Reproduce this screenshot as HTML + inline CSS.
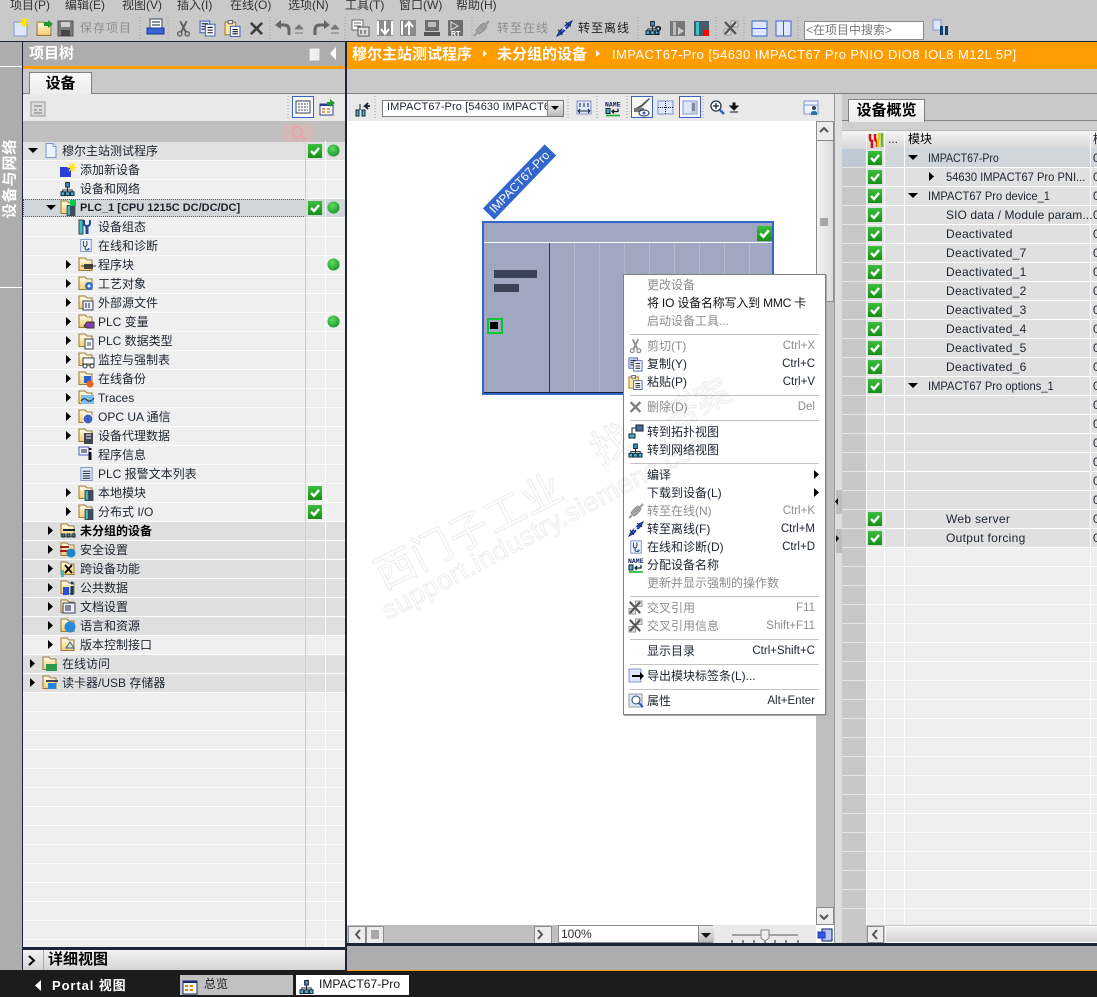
<!DOCTYPE html>
<html><head><meta charset="utf-8"><style>
html,body{margin:0;padding:0}
body{width:1097px;height:997px;position:relative;overflow:hidden;background:#c9c9c9;font:12px/19px "Liberation Sans","Noto Sans CJK SC",sans-serif;color:#1c2430}
.b,.t,.s{position:absolute}
.t{white-space:nowrap;height:19px}
.g{color:#8e8e8e}
.w{color:#fff;font-weight:bold}
.tab{position:absolute;background:linear-gradient(#fafafa,#ececec);border:1px solid #808080;border-bottom:0;font-weight:bold;font-size:15px;text-align:center;color:#000}
.s{background:#c4c4c4;height:1px;left:6px;right:6px}
.r{text-align:right}
.m .t{height:18px;line-height:18px;left:23px}
.m .t.r{left:auto;right:10px;font-size:11.5px}
.x{transform-origin:0 50%}
</style></head><body>

<!-- top -->
<div class="t" style="left:10px;top:-4px;color:#333">项目(P)</div>
<div class="t" style="left:65px;top:-4px;color:#333">编辑(E)</div>
<div class="t" style="left:122px;top:-4px;color:#333">视图(V)</div>
<div class="t" style="left:177px;top:-4px;color:#333">插入(I)</div>
<div class="t" style="left:230px;top:-4px;color:#333">在线(O)</div>
<div class="t" style="left:288px;top:-4px;color:#333">选项(N)</div>
<div class="t" style="left:345px;top:-4px;color:#333">工具(T)</div>
<div class="t" style="left:399px;top:-4px;color:#333">窗口(W)</div>
<div class="t" style="left:456px;top:-4px;color:#333">帮助(H)</div>
<div class="t g" style="left:80px;top:19px;letter-spacing:1px">保存项目</div>
<div class="t g" style="left:497px;top:19px;letter-spacing:1px">转至在线</div>
<div class="t" style="left:578px;top:19px;letter-spacing:1px;color:#222">转至离线</div>
<div class="b" style="left:804px;top:21px;width:118px;height:17px;background:#fff;border:1px solid #8a8a8a"></div>
<div class="t" style="left:806px;top:21px;color:#777">&lt;在项目中搜索&gt;</div>

<div class="b" style="left:0;top:41px;width:1097px;height:1px;background:#1c2636"></div>

<!-- left strip -->
<div class="b" style="left:0;top:42px;width:22px;height:928px;background:#adadad"></div>
<div class="b" style="left:0;top:66px;width:22px;height:1px;background:#fff"></div>
<div class="b" style="left:0;top:287px;width:22px;height:1px;background:#fff"></div>
<div class="t w" style="left:-30px;top:169px;width:80px;text-align:center;transform:rotate(-90deg);font-size:15px;letter-spacing:1px;color:#fff">设备与网络</div>
<div class="b" style="left:22px;top:42px;width:1px;height:928px;background:#1c2636"></div>

<!-- project tree panel -->
<div class="b" style="left:23px;top:42px;width:322px;height:24px;background:#adadad"></div>
<div class="b" style="left:23px;top:66px;width:322px;height:3px;background:#ff9c00"></div>
<div class="t w" style="left:29px;top:44px;font-size:15px">项目树</div>
<div class="b" style="left:23px;top:69px;width:322px;height:24px;background:#c9c9c9"></div>
<div class="b" style="left:23px;top:93px;width:322px;height:1px;background:#808080"></div>
<div class="tab" style="left:29px;top:72px;width:61px;height:22px;line-height:21px">设备</div>
<div class="b" style="left:23px;top:94px;width:322px;height:27px;background:#e9e9e9"></div>
<div class="b" style="left:23px;top:121px;width:322px;height:21px;background:#bfbfbf"></div>
<div class="b" style="left:284px;top:124px;width:30px;height:22px;background:#d2b8b8"></div>

<div class="b" style="left:0;top:1px;width:0;height:0">
<div class="b" style="left:23px;top:141px;width:322px;height:806px;background:repeating-linear-gradient(#efefef 0,#efefef 18px,#fff 18px,#fff 19px)"></div>
<div class="b" style="left:23px;top:141px;width:322px;height:18px;background:#e1e1e1"></div>
<div class="b" style="left:23px;top:521px;width:322px;height:113px;background:repeating-linear-gradient(#dfdfdf 0,#dfdfdf 18px,#fff 18px,#fff 19px)"></div>
<div class="b" style="left:23px;top:654px;width:322px;height:37px;background:repeating-linear-gradient(#dfdfdf 0,#dfdfdf 18px,#fff 18px,#fff 19px)"></div>
<div class="b" style="left:23px;top:198px;width:322px;height:18px;background:#d1d6da"></div>
<div class="b" style="left:23px;top:198px;width:281px;height:16px;border:1px dotted #555"></div>
<div class="b" style="left:305px;top:140px;width:1px;height:806px;background:#cfcfcf"></div>
<div class="b" style="left:325px;top:140px;width:1px;height:806px;background:#fff"></div>

<div class="t" style="left:62px;top:141px">穆尔主站测试程序</div>
<div class="t" style="left:80px;top:160px">添加新设备</div>
<div class="t" style="left:80px;top:179px">设备和网络</div>
<div class="t" style="left:80px;top:198px;font-weight:bold;font-size:11px">PLC_1 [CPU 1215C DC/DC/DC]</div>
<div class="t" style="left:98px;top:217px">设备组态</div>
<div class="t" style="left:98px;top:236px">在线和诊断</div>
<div class="t" style="left:98px;top:255px">程序块</div>
<div class="t" style="left:98px;top:274px">工艺对象</div>
<div class="t" style="left:98px;top:293px">外部源文件</div>
<div class="t" style="left:98px;top:312px">PLC 变量</div>
<div class="t" style="left:98px;top:331px">PLC 数据类型</div>
<div class="t" style="left:98px;top:350px">监控与强制表</div>
<div class="t" style="left:98px;top:369px">在线备份</div>
<div class="t" style="left:98px;top:388px">Traces</div>
<div class="t" style="left:98px;top:407px">OPC UA 通信</div>
<div class="t" style="left:98px;top:426px">设备代理数据</div>
<div class="t" style="left:98px;top:445px">程序信息</div>
<div class="t" style="left:98px;top:464px">PLC 报警文本列表</div>
<div class="t" style="left:98px;top:483px">本地模块</div>
<div class="t" style="left:98px;top:502px">分布式 I/O</div>
<div class="t" style="left:80px;top:521px;font-weight:bold;color:#000">未分组的设备</div>
<div class="t" style="left:80px;top:540px">安全设置</div>
<div class="t" style="left:80px;top:559px">跨设备功能</div>
<div class="t" style="left:80px;top:578px">公共数据</div>
<div class="t" style="left:80px;top:597px">文档设置</div>
<div class="t" style="left:80px;top:616px">语言和资源</div>
<div class="t" style="left:80px;top:635px">版本控制接口</div>
<div class="t" style="left:62px;top:654px">在线访问</div>
<div class="t" style="left:62px;top:673px">读卡器/USB 存储器</div>
</div>

<div class="b" style="left:23px;top:947px;width:322px;height:3px;background:#1c2636"></div>
<div class="b" style="left:23px;top:950px;width:322px;height:20px;background:linear-gradient(#f2f2f2,#d4d4d4)"></div>
<div class="b" style="left:43px;top:950px;width:1px;height:20px;background:#a8a8a8"></div>
<div class="t" style="left:48px;top:950px;font-weight:bold;font-size:15px;color:#000">详细视图</div>

<div class="b" style="left:345px;top:42px;width:2px;height:928px;background:#1c2636"></div>

<!-- center -->
<div class="b" style="left:347px;top:42px;width:750px;height:27px;background:#ff9c00"></div>
<div class="t w" style="left:352px;top:45px;font-size:15px">穆尔主站测试程序</div>
<div class="t w" style="left:497px;top:45px;font-size:15px">未分组的设备</div>
<div class="t" style="left:612px;top:45px;color:#fff;font-size:13px;letter-spacing:.43px">IMPACT67-Pro [54630 IMPACT67 Pro PNIO DIO8 IOL8 M12L 5P]</div>
<div class="b" style="left:347px;top:69px;width:750px;height:24px;background:#c9c9c9"></div>
<div class="b" style="left:347px;top:93px;width:750px;height:1px;background:#808080"></div>
<div class="b" style="left:347px;top:94px;width:488px;height:27px;background:#e9e9e9"></div>
<div class="b" style="left:347px;top:121px;width:469px;height:804px;background:#fff"></div>
<div class="b" style="left:382px;top:100px;width:180px;height:15px;background:#fff;border:1px solid #7c7c7c"></div>
<div class="t" style="left:387px;top:98px;width:160px;overflow:hidden;letter-spacing:.1px;font-size:11px">IMPACT67-Pro [54630 IMPACT67 Pro</div>
<div class="b" style="left:547px;top:101px;width:15px;height:15px;background:linear-gradient(#eee,#bbb);border-left:1px solid #888"></div>

<!-- scroll right -->
<div class="b" style="left:816px;top:121px;width:18px;height:804px;background:#bfbfbf"></div>
<div class="b" style="left:816px;top:121px;width:16px;height:18px;background:#ececec;border:1px solid #8c8c8c"></div>
<div class="b" style="left:816px;top:140px;width:16px;height:160px;background:linear-gradient(90deg,#f2f2f2,#dcdcdc);border:1px solid #8c8c8c"></div>
<div class="b" style="left:816px;top:907px;width:16px;height:16px;background:#ececec;border:1px solid #8c8c8c"></div>
<!-- scroll bottom -->
<div class="b" style="left:347px;top:925px;width:469px;height:18px;background:#bfbfbf"></div>
<div class="b" style="left:348px;top:926px;width:16px;height:16px;background:#ececec;border:1px solid #8c8c8c"></div>
<div class="b" style="left:366px;top:926px;width:16px;height:16px;background:#ececec;border:1px solid #8c8c8c"></div>
<div class="b" style="left:534px;top:926px;width:16px;height:16px;background:#ececec;border:1px solid #8c8c8c"></div>
<div class="b" style="left:713px;top:925px;width:103px;height:18px;background:#e9e9e9"></div>
<div class="b" style="left:558px;top:925px;width:153px;height:16px;background:#fff;border:1px solid #8c8c8c"></div>
<div class="t" style="left:561px;top:925px;color:#333">100%</div>
<div class="b" style="left:698px;top:926px;width:15px;height:16px;background:linear-gradient(#eee,#bbb);border-left:1px solid #888"></div>
<div class="b" style="left:816px;top:925px;width:18px;height:18px;background:#fff"></div>

<!-- device -->
<div class="b" style="left:482px;top:221px;width:288px;height:170px;background:#a1a7c0;border:2px solid #3366cc"></div>
<div class="b" style="left:484px;top:242px;width:288px;height:1px;background:#fff"></div>
<div class="b" style="left:549px;top:243px;width:1px;height:150px;background:#333b4e"></div>
<div class="b" style="left:574px;top:243px;width:176px;height:150px;background:repeating-linear-gradient(90deg,#b4b9cc 0,#b4b9cc 1px,transparent 1px,transparent 25px)"></div>
<div class="b" style="left:484px;top:392px;width:288px;height:1px;background:#1c2636"></div>
<div class="b" style="left:494px;top:270px;width:43px;height:8px;background:#3a4257"></div>
<div class="b" style="left:494px;top:284px;width:25px;height:8px;background:#3a4257"></div>
<div class="b" style="left:487px;top:318px;width:12px;height:12px;border:2px solid #00c832;background:#a1a7c0"></div>
<div class="b" style="left:490px;top:322px;width:8px;height:7px;background:#000"></div>
<div class="b" style="left:475px;top:174px;width:89px;height:16px;background:#3366cc;transform:rotate(-46deg);color:#fff;font-size:12px;line-height:16px;text-align:center;white-space:nowrap">IMPACT67-Pro</div>

<!-- right panel -->
<div class="b" style="left:834px;top:94px;width:8px;height:849px;background:#dfdfdf;border-left:1px solid #9a9a9a"></div>
<div class="b" style="left:836px;top:490px;width:6px;height:24px;background:#bdbdbd"></div>
<div class="b" style="left:836px;top:529px;width:6px;height:24px;background:#bdbdbd"></div>
<div class="b" style="left:842px;top:94px;width:255px;height:26px;background:#c9c9c9"></div>
<div class="b" style="left:842px;top:120px;width:255px;height:1px;background:#808080"></div>
<div class="b" style="left:842px;top:121px;width:255px;height:9px;background:#cfcfcf"></div>
<div class="tab" style="left:848px;top:99px;width:75px;height:22px;line-height:21px">设备概览</div>
<div class="b" style="left:842px;top:130px;width:255px;height:18px;background:linear-gradient(#f4f4f4,#d6d6d6);border-top:1px solid #bbb"></div>

<div class="b" style="left:0;top:1px;width:0;height:0">
<div class="b" style="left:842px;top:148px;width:255px;height:777px;background:repeating-linear-gradient(#efefef 0,#efefef 18px,#fff 18px,#fff 19px)"></div>
<div class="b" style="left:842px;top:148px;width:255px;height:398px;background:repeating-linear-gradient(#e0e0e0 0,#e0e0e0 18px,#fff 18px,#fff 19px)"></div>
<div class="b" style="left:842px;top:148px;width:24px;height:777px;background:repeating-linear-gradient(#c8c8c8 0,#c8c8c8 18px,#e6e6e6 18px,#e6e6e6 19px)"></div>
<div class="b" style="left:842px;top:148px;width:24px;height:18px;background:#bfcad4"></div>
<div class="b" style="left:884px;top:148px;width:213px;height:18px;background:#cfd6dc"></div>
<div class="b" style="left:866px;top:130px;width:1px;height:795px;background:#fff"></div>
<div class="b" style="left:884px;top:130px;width:1px;height:795px;background:#fff"></div>
<div class="b" style="left:904px;top:130px;width:1px;height:795px;background:#fff"></div>
<div class="b" style="left:1090px;top:130px;width:1px;height:795px;background:#fff"></div>
<div class="t" style="left:888px;top:129px">...</div>
<div class="t" style="left:908px;top:129px;color:#000">模块</div>
<div class="t" style="left:1093px;top:129px">模</div>

<div class="t x" style="left:928px;top:148px;transform:scaleX(.88)">IMPACT67-Pro</div>
<div class="t x" style="left:946px;top:167px;transform:scaleX(.93)">54630 IMPACT67 Pro PNI...</div>
<div class="t x" style="left:928px;top:186px;transform:scaleX(.93)">IMPACT67 Pro device_1</div>
<div class="t" style="left:946px;top:205px;letter-spacing:.1px">SIO data / Module param...</div>
<div class="t" style="left:946px;top:224px;letter-spacing:.3px">Deactivated</div>
<div class="t" style="left:946px;top:243px;letter-spacing:.3px">Deactivated_7</div>
<div class="t" style="left:946px;top:262px;letter-spacing:.3px">Deactivated_1</div>
<div class="t" style="left:946px;top:281px;letter-spacing:.3px">Deactivated_2</div>
<div class="t" style="left:946px;top:300px;letter-spacing:.3px">Deactivated_3</div>
<div class="t" style="left:946px;top:319px;letter-spacing:.3px">Deactivated_4</div>
<div class="t" style="left:946px;top:338px;letter-spacing:.3px">Deactivated_5</div>
<div class="t" style="left:946px;top:357px;letter-spacing:.3px">Deactivated_6</div>
<div class="t x" style="left:928px;top:376px;transform:scaleX(.93)">IMPACT67 Pro options_1</div>
<div class="t" style="left:946px;top:509px;letter-spacing:.3px">Web server</div>
<div class="t" style="left:946px;top:528px;letter-spacing:.3px">Output forcing</div>
<div class="t" style="left:1093px;top:148px">0</div><div class="t" style="left:1093px;top:167px">0</div><div class="t" style="left:1093px;top:186px">0</div><div class="t" style="left:1093px;top:205px">0</div><div class="t" style="left:1093px;top:224px">0</div><div class="t" style="left:1093px;top:243px">0</div><div class="t" style="left:1093px;top:262px">0</div><div class="t" style="left:1093px;top:281px">0</div><div class="t" style="left:1093px;top:300px">0</div><div class="t" style="left:1093px;top:319px">0</div><div class="t" style="left:1093px;top:338px">0</div><div class="t" style="left:1093px;top:357px">0</div><div class="t" style="left:1093px;top:376px">0</div><div class="t" style="left:1093px;top:395px">0</div><div class="t" style="left:1093px;top:414px">0</div><div class="t" style="left:1093px;top:433px">0</div><div class="t" style="left:1093px;top:452px">0</div><div class="t" style="left:1093px;top:471px">0</div><div class="t" style="left:1093px;top:490px">0</div><div class="t" style="left:1093px;top:509px">0</div><div class="t" style="left:1093px;top:528px">0</div>
</div>

<div class="b" style="left:842px;top:925px;width:24px;height:18px;background:#c8c8c8"></div>
<div class="b" style="left:866px;top:925px;width:231px;height:18px;background:#bfbfbf"></div>
<div class="b" style="left:867px;top:926px;width:15px;height:15px;background:#ececec;border:1px solid #8c8c8c"></div>
<div class="b" style="left:885px;top:926px;width:212px;height:15px;background:linear-gradient(#f0f0f0,#d4d4d4);border:1px solid #fff"></div>

<div class="b" style="left:347px;top:943px;width:750px;height:3px;background:#1c2636"></div>
<div class="b" style="left:347px;top:946px;width:750px;height:24px;background:#adadad"></div>
<div class="b" style="left:347px;top:970px;width:750px;height:1px;background:#ff9c00"></div>

<!-- bottom bar -->
<div class="b" style="left:0;top:971px;width:1097px;height:26px;background:#1c1c1c"></div>
<div class="b" style="left:0;top:970px;width:347px;height:1px;background:#1c1c1c"></div>
<div class="t" style="left:52px;top:976px;color:#fff;font-weight:bold;font-size:13px;letter-spacing:.9px">Portal 视图</div>
<div class="b" style="left:180px;top:975px;width:113px;height:20px;background:#c0c0c0"></div>
<div class="t" style="left:204px;top:975px;color:#222">总览</div>
<div class="b" style="left:296px;top:975px;width:113px;height:20px;background:#fff"></div>
<div class="t" style="left:319px;top:975px;color:#111;letter-spacing:.05px">IMPACT67-Pro</div>

<!-- icons -->
<svg width="1097" height="997" viewBox="0 0 1097 997" style="position:absolute;left:0;top:0">
<defs>
<linearGradient id="gc" x1="0" y1="0" x2="0" y2="1"><stop offset="0" stop-color="#3cbf3c"/><stop offset="1" stop-color="#159015"/></linearGradient>
<radialGradient id="gd" cx=".4" cy=".35" r=".7"><stop offset="0" stop-color="#5fdc5f"/><stop offset="1" stop-color="#16962a"/></radialGradient>
<linearGradient id="fg" x1="0" y1="0" x2="0" y2="1"><stop offset="0" stop-color="#fff7d0"/><stop offset="1" stop-color="#f5cf78"/></linearGradient>
<symbol id="ck" viewBox="0 0 14 14"><rect width="14" height="14" fill="url(#gc)"/><path d="M3 7l3 3 5-6" fill="none" stroke="#fff" stroke-width="2.4"/></symbol>
<symbol id="dot" viewBox="0 0 14 14"><circle cx="7" cy="7" r="6.5" fill="url(#gd)"/></symbol>
<symbol id="fo" viewBox="0 0 16 16"><path d="M1 14.500V2h6l2 2h5v10.500z" fill="url(#fg)" stroke="#9a7a3a"/><path d="M2.500 5h10" stroke="#fff"/></symbol>
<symbol id="pg" viewBox="0 0 16 16"><path d="M3 1h7l3 3v11H3z" fill="#eef3ff" stroke="#7e93c8"/><path d="M10 1v3h3" fill="#fff" stroke="#7e93c8"/></symbol>
<symbol id="net" viewBox="0 0 16 16"><rect x="6" y="1" width="4" height="5" fill="#3a8fc2" stroke="#123"/><path d="M8 6v3M3 11V9h10v2M8 9v2" fill="none" stroke="#123"/><rect x="1" y="11" width="4" height="4" fill="#4ab0c8" stroke="#123"/><rect x="6" y="11" width="4" height="4" fill="#4ab0c8" stroke="#123"/><rect x="11" y="11" width="4" height="4" fill="#4ab0c8" stroke="#123"/></symbol>
<symbol id="plc" viewBox="0 0 8 10"><rect width="8" height="10" fill="#3d4b5c"/><rect x="1" y="1" width="2" height="8" fill="#38c0c8"/></symbol>
<symbol id="doc" viewBox="0 0 16 16"><rect x="2" y="1" width="12" height="14" fill="#dfe7fb" stroke="#7e93c8"/><path d="M4 5h8M4 7.500h8M4 10h8M4 12.500h8" stroke="#123"/></symbol>
<symbol id="steth" viewBox="0 0 16 16"><rect x="2" y="1" width="12" height="14" fill="#eef3ff" stroke="#6e86c8"/><path d="M5 3v4q0 2 2 2t2-2V3M7 9v3q0 1 2 1h2" fill="none" stroke="#123"/><circle cx="11" cy="12" r="1.300" fill="#3367cc"/></symbol>
<symbol id="cut" viewBox="0 0 16 16"><path d="M5 1l5 10M11 1L6 11" stroke="currentColor" stroke-width="1.800"/><circle cx="4.500" cy="13" r="2" fill="none" stroke="currentColor" stroke-width="1.300"/><circle cx="11.500" cy="13" r="2" fill="none" stroke="currentColor" stroke-width="1.300"/></symbol>
<symbol id="cpy" viewBox="0 0 16 16"><rect x="1" y="1" width="9" height="11" fill="#dfe7fb" stroke="#4a63b8"/><rect x="6" y="4" width="9" height="11" fill="#fff" stroke="#4a63b8"/><path d="M2.500 3.500h6M2.500 6h3M2.500 8.500h3M8 7h5M8 9.500h5M8 12h5" stroke="#112"/></symbol>
<symbol id="pst" viewBox="0 0 16 16"><rect x="1" y="2" width="10" height="12" fill="#fde79d" stroke="#9a7a3a"/><rect x="4" y="0.500" width="4" height="3" fill="#eee" stroke="#666"/><rect x="6" y="6" width="9" height="9.500" fill="#fff" stroke="#4a63b8"/><path d="M8 9h5M8 11h5M8 13h5" stroke="#112"/></symbol>
<symbol id="del" viewBox="0 0 16 16"><path d="M2 2l12 12M14 2L2 14" stroke="currentColor" stroke-width="2.800"/></symbol>
<symbol id="onl" viewBox="0 0 16 16"><path d="M1 15l3-3M15 1l-3 3" stroke="#999" stroke-width="2"/><path d="M3 10l3-4 4 4-4 3zM7 5l3-2 3 3-2 3z" fill="#a8a8a8" stroke="#888"/></symbol>
<symbol id="off" viewBox="0 0 16 16"><path d="M1 15l4-2 3-3-2-2-3 3zM15 1l-4 2-3 3 2 2 3-3z" fill="#2e55e0" stroke="#102a90"/><path d="M6 9l3-3" stroke="#fff"/><path d="M2 9l4 5M9 2l5 4" stroke="#123" stroke-width="1"/></symbol>
<symbol id="name" viewBox="0 0 16 16"><text x="0" y="6" font-size="6.500" font-weight="bold" font-family="Liberation Mono" fill="#102060">NAME</text><rect x="1" y="8" width="4" height="5" fill="#4ab0c8" stroke="#123"/><path d="M13 8v3H7M9 9l-2 2 2 2" fill="none" stroke="#123" stroke-width="1.300"/><path d="M1 15h14" stroke="#17b030" stroke-width="1.600"/></symbol>
<symbol id="xr" viewBox="0 0 16 16"><rect x="8" y="1" width="7" height="6" fill="#ddd" stroke="#999"/><rect x="1" y="9" width="7" height="6" fill="#ddd" stroke="#999"/><path d="M2 2l11 12M13 2L2 14" stroke="#555" stroke-width="2.300"/></symbol>
</defs>

<!-- toolbar -->
<g><rect x="14" y="22" width="13" height="14" fill="#dfe7fb" stroke="#7e93c8"/><path d="M24 18v9M19.500 22.500h9M21 19l6 7M27 19l-6 7" stroke="#ffe400" stroke-width="1.500"/></g>
<g><use href="#fo" x="36" y="20" width="17" height="17"/><path d="M44 22h4v-2l5 4-5 4v-2h-4z" fill="#1d9a2c"/></g>
<g><rect x="58" y="21" width="15" height="15" fill="#7a7a7a" stroke="#555"/><rect x="61" y="22" width="9" height="5" fill="#cfcfcf"/><rect x="61" y="30" width="9" height="6" fill="#444"/></g>
<path d="M140 17v23M168 17v23M270 17v23M345 17v23M472 17v23M638 17v23M716 17v23M744 17v23M798 17v23" stroke="#9d9d9d" stroke-dasharray="1 2"/>
<g><rect x="150" y="19" width="12" height="9" fill="#fff" stroke="#345"/><path d="M152 22h8M152 25h8" stroke="#123"/><path d="M147 28h17v6h-17z" fill="#3b63d8" stroke="#123a9a"/></g>
<use href="#cut" x="175" y="20" width="17" height="17" color="#5e5e5e"/>
<use href="#cpy" x="199" y="20" width="17" height="17"/>
<use href="#pst" x="224" y="20" width="17" height="17"/>
<use href="#del" x="249" y="21" width="15" height="15" color="#3c3c3c"/>
<g fill="none" stroke="#666" stroke-width="3"><path d="M277 25h7q5 0 5 5v5"/><path d="M327 25h-7q-5 0-5 5v5"/></g>
<path d="M275 25l6-5v9zM330 25l-6-5v9z" fill="#666"/>
<path d="M295 29h8M295 33h8M295 29l4-4 4 4M331 29h8M331 33h8M331 29l4-4 4 4" stroke="#777" fill="#777"/>
<g><rect x="352" y="20" width="11" height="10" fill="#fff" stroke="#666"/><path d="M354 23h7M354 26h7" stroke="#666"/><rect x="358" y="27" width="11" height="9" fill="#ddd" stroke="#555"/><path d="M361 30v4M365 30v4" stroke="#333"/></g>
<g><rect x="377" y="20" width="16" height="16" fill="#8a8a8a"/><path d="M385 21v12M381 29l4 5 4-5M378 21v14M392 21v14" stroke="#fff" stroke-width="2" fill="none"/></g>
<g><rect x="400" y="20" width="16" height="16" fill="#8a8a8a"/><path d="M409 35V23M405 27l4-5 4 5M402 21v14" stroke="#fff" stroke-width="2" fill="none"/></g>
<g><rect x="425" y="20" width="14" height="11" fill="#6e6e6e"/><rect x="428" y="22" width="8" height="5" fill="#bbb"/><rect x="424" y="32" width="16" height="4" fill="#555"/></g>
<g><rect x="448" y="20" width="15" height="16" fill="#6e6e6e"/><path d="M451 22l7 4-7 4z" fill="none" stroke="#ddd"/><text x="451" y="36" font-size="7" font-weight="bold" fill="#fff" font-family="Liberation Sans">RT</text></g>
<use href="#onl" x="473" y="20" width="17" height="17"/>
<use href="#off" x="556" y="20" width="17" height="17"/>
<g><use href="#net" x="645" y="20" width="15" height="16"/><text x="654" y="35" font-size="13" font-weight="bold" fill="#123" font-family="Liberation Sans">?</text></g>
<g><rect x="670" y="21" width="15" height="15" fill="#777"/><rect x="673" y="22" width="3" height="13" fill="#bbb"/><path d="M678 27l6 4-6 4z" fill="#ccc"/></g>
<g><rect x="694" y="21" width="15" height="15" fill="#4a5868"/><rect x="696" y="22" width="3" height="13" fill="#35c6c6"/><rect x="703" y="30" width="6" height="6" fill="#f00"/></g>
<use href="#xr" x="723" y="20" width="16" height="16"/>
<g fill="#e0e8ff" stroke="#3a62c8"><rect x="752" y="21" width="15" height="15"/><path d="M752 28.500h15" fill="none"/><rect x="776" y="21" width="15" height="15"/><path d="M783.500 21v15" fill="none"/></g>
<g><rect x="933" y="20" width="8" height="10" fill="#dfe7fb" stroke="#7e93c8"/><path d="M940 26h3v9h-3zM945 26h3v9h-3z" fill="#123a70"/></g>

<!-- tree header -->
<path d="M310 49h9v11h-9zM312 49v11M314 49v11M316 49v11" fill="#e6e6e6" stroke="#fff" stroke-width=".7"/>
<path d="M336 47v13l-6-6.500z" fill="#fff"/>
<path d="M483 50v7l4-3.500zM596 50v7l4-3.500z" fill="#fff"/>
<!-- tree toolbar -->
<g><rect x="31" y="102" width="14" height="14" fill="#ddd" stroke="#999"/><path d="M34 106h8M34 110h3M39 110h3M34 113h8" stroke="#777"/></g>
<path d="M288 96v23M375 96v23M568 96v23M597 96v23M627 96v23M703 96v23" stroke="#9d9d9d" stroke-dasharray="1 2"/>
<rect x="292.500" y="96.500" width="21" height="21" fill="#f8f8f8" stroke="#3a62c8"/>
<g><rect x="296" y="101" width="14" height="12" fill="#fff" stroke="#345"/><path d="M298 104h10M298 107h10M298 110h10" stroke="#345" stroke-dasharray="2 1"/></g>
<g><rect x="320" y="104" width="13" height="11" fill="#fff" stroke="#2a3f88"/><path d="M320 104h13v2h-13z" fill="#2a3f88"/><path d="M322 109h3M327 109h3M322 112h3M327 112h3" stroke="#e08020" stroke-width="1.500"/><path d="M327 102h3v-3l5 4-5 4v-2h-3z" fill="#1d9a2c"/></g>
<circle cx="297" cy="132" r="5" fill="none" stroke="#e4a6a6" stroke-width="2"/><path d="M301 136l4 4" stroke="#e4a6a6" stroke-width="2"/>

<!-- tree arrows -->
<path d="M28 148h10l-5 5zM46 205h10l-5 5z" fill="#000"/>
<g fill="#000"><path d="M66 260l5 4.500-5 4.500zM66 279l5 4.500-5 4.500zM66 298l5 4.500-5 4.500zM66 317l5 4.500-5 4.500zM66 336l5 4.500-5 4.500zM66 355l5 4.500-5 4.500zM66 374l5 4.500-5 4.500zM66 393l5 4.500-5 4.500zM66 412l5 4.500-5 4.500zM66 431l5 4.500-5 4.500zM66 488l5 4.500-5 4.500zM66 507l5 4.500-5 4.500zM48 526l5 4.500-5 4.500zM48 545l5 4.500-5 4.500zM48 564l5 4.500-5 4.500zM48 583l5 4.500-5 4.500zM48 602l5 4.500-5 4.500zM48 621l5 4.500-5 4.500zM48 640l5 4.500-5 4.500zM30 659l5 4.500-5 4.500zM30 678l5 4.500-5 4.500z"/></g>
<!-- tree icons -->
<use href="#pg" x="43" y="142" width="16" height="17"/>
<g><rect x="60" y="167" width="11" height="10" fill="#2a3fd8"/><path d="M72 163v9M67.500 167.500h9M69 164l6 7M75 164l-6 7" stroke="#ffe400" stroke-width="1.300"/></g>
<use href="#net" x="60" y="181" width="15" height="16"/>
<g><use href="#fo" x="60" y="199" width="16" height="16"/><use href="#plc" x="66" y="205" width="10" height="11"/><rect x="70" y="200" width="6" height="6" fill="#00c848"/></g>
<g><rect x="79" y="220" width="4" height="14" fill="#38c0c8" stroke="#345"/><path d="M87 226v8" stroke="#1d4ca0" stroke-width="3"/><path d="M84 220v3q0 3 3 3t3-3v-3" fill="none" stroke="#1d4ca0" stroke-width="2"/></g>
<use href="#steth" x="79" y="238" width="14" height="15"/>
<g><use href="#fo" x="78" y="256" width="16" height="16"/><rect x="84" y="264" width="9" height="5" fill="#444"/><path d="M81 266h15" stroke="#333"/></g>
<g><use href="#fo" x="78" y="275" width="16" height="16"/><circle cx="89" cy="286" r="4" fill="#2e6fd0"/><circle cx="89" cy="286" r="1.500" fill="#fff"/></g>
<g><use href="#fo" x="78" y="294" width="16" height="16"/><rect x="83" y="301" width="10" height="9" fill="#eef" stroke="#345"/><path d="M86 303v5M89 303v5" stroke="#123"/></g>
<g><use href="#fo" x="78" y="313" width="16" height="16"/><path d="M84 326l3-4h7v6h-7z" fill="#7a3fb0" stroke="#432"/></g>
<g><use href="#fo" x="78" y="332" width="16" height="16"/><rect x="85" y="339" width="8" height="10" fill="#fff" stroke="#345"/><path d="M88 342v4M90 342v4" stroke="#345"/></g>
<g><use href="#fo" x="78" y="351" width="16" height="16"/><rect x="83" y="358" width="11" height="6" fill="#fff" stroke="#345"/><circle cx="85" cy="366" r="2" fill="#fff" stroke="#234"/><circle cx="92" cy="366" r="2" fill="#fff" stroke="#234"/></g>
<g><use href="#fo" x="78" y="370" width="16" height="16"/><rect x="84" y="376" width="7" height="7" fill="#2a5ed0"/><circle cx="90" cy="384" r="3.500" fill="#e8621c"/></g>
<g><use href="#fo" x="78" y="389" width="16" height="16"/><rect x="81" y="395" width="13" height="9" fill="#7cc0ea"/><path d="M81 401q3-4 6-1t7-2" fill="none" stroke="#123"/></g>
<g><use href="#fo" x="78" y="408" width="16" height="16"/><circle cx="88" cy="419" r="5" fill="#4060c0" stroke="#fff"/></g>
<g><use href="#fo" x="78" y="427" width="16" height="16"/><rect x="84" y="433" width="9" height="11" fill="#445"/><path d="M86 435h5M86 438h5" stroke="#fff"/></g>
<g><rect x="79" y="447" width="10" height="8" fill="#eef3ff" stroke="#4a63b8"/><path d="M81 450h6M81 452h6" stroke="#123"/><path d="M90 448v2M90 452v8" stroke="#111" stroke-width="3"/></g>
<use href="#doc" x="79" y="466" width="15" height="16"/>
<g><use href="#fo" x="78" y="484" width="16" height="16"/><use href="#plc" x="84" y="490" width="10" height="11"/></g>
<g><use href="#fo" x="78" y="503" width="16" height="16"/><use href="#plc" x="84" y="509" width="10" height="11"/></g>
<g><use href="#fo" x="60" y="522" width="16" height="16"/><path d="M63 530h12" stroke="#123" stroke-width="2"/><path d="M62 534h3v3h-3zM67 534h3v3h-3zM72 534h3v3h-3z" fill="#3a8fc2" stroke="#123"/></g>
<g><use href="#fo" x="60" y="541" width="16" height="16"/><path d="M60 546h9v2h-9zM60 550h9v2h-9z" fill="#a02020"/><circle cx="71" cy="553" r="4.500" fill="#1a86c8"/></g>
<g><use href="#fo" x="60" y="560" width="16" height="16"/><path d="M65 565l7 8M72 565l-7 8" stroke="#000" stroke-width="1.800"/><rect x="61" y="570" width="3" height="7" fill="#38c0c8"/></g>
<g><use href="#fo" x="60" y="579" width="16" height="16"/><rect x="63" y="587" width="6" height="8" fill="#2c50d8"/><path d="M72 586v9" stroke="#123a70" stroke-width="3"/><circle cx="72" cy="583" r="1.500" fill="#123a70"/></g>
<g><use href="#fo" x="60" y="598" width="16" height="16"/><rect x="63" y="603" width="12" height="10" fill="#eef" stroke="#345"/><path d="M65 606h6M65 608h6M65 610h6" stroke="#123"/></g>
<g><use href="#fo" x="60" y="617" width="16" height="16"/><circle cx="70" cy="627" r="5.500" fill="#2a8ad8"/></g>
<g><use href="#fo" x="60" y="636" width="16" height="16"/><path d="M70 642l-4 6h8z" fill="none" stroke="#2c5ec8"/></g>
<g><use href="#fo" x="42" y="655" width="16" height="16"/><rect x="46" y="664" width="11" height="7" fill="#2d9a50"/></g>
<g><use href="#fo" x="42" y="674" width="16" height="16"/><path d="M46 680h12v2H46z" fill="#445"/><rect x="48" y="683" width="8" height="6" fill="#1a86e8"/></g>

<!-- tree status -->
<use href="#ck" x="308" y="144" width="14" height="14"/><use href="#dot" x="327" y="144" width="13" height="13"/>
<use href="#ck" x="308" y="201" width="14" height="14"/><use href="#dot" x="327" y="201" width="13" height="13"/>
<use href="#dot" x="327" y="258" width="13" height="13"/><use href="#dot" x="327" y="315" width="13" height="13"/>
<use href="#ck" x="308" y="486" width="14" height="14"/><use href="#ck" x="308" y="505" width="14" height="14"/>

<!-- detail / portal -->
<path d="M29 956l5 4.500-5 4.500" fill="none" stroke="#000" stroke-width="2"/>
<path d="M41 980v11l-6-5.500z" fill="#fff"/>
<g><rect x="183" y="981" width="14" height="13" fill="#f4f4f4" stroke="#1a2a70"/><path d="M183 982h14" stroke="#1a2a70" stroke-width="2"/><path d="M185 986h3M190 986h3M185 990h3M190 990h3" stroke="#d58a10" stroke-width="2"/></g>
<use href="#net" x="299" y="979" width="15" height="16"/>

<!-- center toolbar -->
<g><path d="M356 110h3v6h-3zM362 110h3v6h-3z" fill="#4ab0c8" stroke="#123"/><path d="M360 104v6" stroke="#123"/><path d="M370 106h-5l3-3M365 106l3 3" stroke="#123" stroke-width="1.800" fill="none"/></g>
<path d="M551 106h8l-4 4z" fill="#000"/>
<g><rect x="577" y="101" width="14" height="13" fill="#dfe7fb" stroke="#7e93c8"/><path d="M580 103v4M584 103v4M588 103v4M578 111h12M578 111l2-2M578 111l2 2M590 111l-2-2M590 111l-2 2" stroke="#123" fill="none"/></g>
<use href="#name" x="605" y="100" width="16" height="17"/>
<rect x="631.500" y="96.500" width="21" height="21" fill="#f8f8f8" stroke="#3a62c8"/>
<g><path d="M636 110l6-3 8-8-1-1-8 7-5 3z" fill="#555"/><path d="M634 108h10v4h-10z" fill="#777"/><ellipse cx="644" cy="113" rx="5" ry="3" fill="#fff" stroke="#234"/><circle cx="644" cy="113" r="1.500" fill="#2a5ed0"/></g>
<g><rect x="658" y="101" width="15" height="13" fill="#dfe7fb" stroke="#7e93c8"/><path d="M665.500 101v13M658 107.500h15" stroke="#123" stroke-dasharray="1 1"/></g>
<rect x="679.500" y="96.500" width="21" height="21" fill="#f8f8f8" stroke="#3a62c8"/>
<g><rect x="683" y="101" width="14" height="13" fill="#dfe7fb" stroke="#7e93c8"/><rect x="691" y="102" width="5" height="11" fill="#c6ccd8"/><path d="M692 104h3M692 106h3M692 108h3M692 110h3" stroke="#345"/></g>
<g><circle cx="716" cy="106" r="5" fill="#fff" stroke="#234" stroke-width="1.300"/><path d="M720 110l4 4" stroke="#2a5ed0" stroke-width="2.500"/><path d="M713 106h6M716 103v6" stroke="#123" stroke-width="1.300"/></g>
<path d="M730 106h3v-3h2v3h3l-4 4zM730 112h8" fill="#111" stroke="#111"/>
<g><rect x="804" y="101" width="14" height="13" fill="#eef3ff" stroke="#7e93c8"/><path d="M804 105h14" stroke="#7e93c8"/><circle cx="814" cy="108" r="2" fill="#345"/><path d="M811 115v-2q0-2 3-2t3 2v2z" fill="#2a6ea8"/></g>

<!-- scrollbar glyphs -->
<path d="M820 132l4-4 4 4M820 915l4 4 4-4" fill="none" stroke="#555" stroke-width="2"/>
<path d="M820 219h8M820 221h8M820 223h8M820 225h8" stroke="#666"/>
<path d="M360 930l-4 4.500 4 4.500M538 930l4 4.500-4 4.500M877 930l-4 4.500 4 4.500" fill="none" stroke="#555" stroke-width="2"/>
<path d="M372 930v9M374 930v9M376 930v9M378 930v9" stroke="#666"/>
<path d="M701 933h10l-5 5z" fill="#111"/>
<path d="M732 935h66" stroke="#555"/>
<path d="M732 940v3M743 940v3M754 940v3M765 940v3M775 940v3M786 940v3M798 940v3" stroke="#222"/>
<path d="M761 930h8v8l-4 3-4-3z" fill="#eee" stroke="#888"/>
<rect x="822" y="929" width="10" height="12" fill="#b8c6ea" stroke="#0a1d6a"/><rect x="818" y="932" width="7" height="6" fill="#2f58e8" stroke="#1a3ab8"/>

<!-- device check -->
<use href="#ck" x="757" y="226" width="15" height="15"/>

<!-- right panel icons -->
<path d="M838 498v7l-3-3.500zM836 535v7l3-3.500z" fill="#000"/>
<g fill="none" stroke-width="2.500"><path d="M870 134v4q0 3 2 3v7" stroke="#d81010"/><path d="M875 134v4q0 3 2 3v6" stroke="#d81010"/><path d="M879 133v5q0 3-1 3v6" stroke="#e8c800"/><path d="M882 133v14" stroke="#68b820"/></g>
<path d="M908 155h10l-5 5zM908 193h10l-5 5zM908 383h10l-5 5zM929 172l5 4.500-5 4.500z" fill="#000"/>
<use href="#ck" x="868" y="151" width="14" height="14"/><use href="#ck" x="868" y="170" width="14" height="14"/><use href="#ck" x="868" y="189" width="14" height="14"/><use href="#ck" x="868" y="208" width="14" height="14"/><use href="#ck" x="868" y="227" width="14" height="14"/><use href="#ck" x="868" y="246" width="14" height="14"/><use href="#ck" x="868" y="265" width="14" height="14"/><use href="#ck" x="868" y="284" width="14" height="14"/><use href="#ck" x="868" y="303" width="14" height="14"/><use href="#ck" x="868" y="322" width="14" height="14"/><use href="#ck" x="868" y="341" width="14" height="14"/><use href="#ck" x="868" y="360" width="14" height="14"/><use href="#ck" x="868" y="379" width="14" height="14"/><use href="#ck" x="868" y="512" width="14" height="14"/><use href="#ck" x="868" y="531" width="14" height="14"/>
</svg>

<!-- context menu -->
<div class="b m" style="left:623px;top:274px;width:201px;height:439px;background:#fff;border:1px solid #808080;box-shadow:1px 1px 0 #a8a8a8">
<div class="t g" style="top:1px">更改设备</div>
<div class="t" style="top:19px;color:#111;letter-spacing:-.2px">将 IO 设备名称写入到 MMC 卡</div>
<div class="t g" style="top:37px">启动设备工具...</div>
<div class="s" style="top:59px"></div>
<div class="t g" style="top:62px">剪切(T)</div><div class="t r g" style="top:62px">Ctrl+X</div>
<div class="t" style="top:80px">复制(Y)</div><div class="t r" style="top:80px">Ctrl+C</div>
<div class="t" style="top:98px">粘贴(P)</div><div class="t r" style="top:98px">Ctrl+V</div>
<div class="s" style="top:120px"></div>
<div class="t g" style="top:123px">删除(D)</div><div class="t r g" style="top:123px">Del</div>
<div class="s" style="top:145px"></div>
<div class="t" style="top:148px">转到拓扑视图</div>
<div class="t" style="top:166px">转到网络视图</div>
<div class="s" style="top:188px"></div>
<div class="t" style="top:191px">编译</div>
<div class="t" style="top:209px">下载到设备(L)</div>
<div class="t g" style="top:227px">转至在线(N)</div><div class="t r g" style="top:227px">Ctrl+K</div>
<div class="t" style="top:245px">转至离线(F)</div><div class="t r" style="top:245px">Ctrl+M</div>
<div class="t" style="top:263px">在线和诊断(D)</div><div class="t r" style="top:263px">Ctrl+D</div>
<div class="t" style="top:281px">分配设备名称</div>
<div class="t g" style="top:299px">更新并显示强制的操作数</div>
<div class="s" style="top:321px"></div>
<div class="t g" style="top:324px">交叉引用</div><div class="t r g" style="top:324px">F11</div>
<div class="t g" style="top:342px">交叉引用信息</div><div class="t r g" style="top:342px">Shift+F11</div>
<div class="s" style="top:364px"></div>
<div class="t" style="top:367px">显示目录</div><div class="t r" style="top:367px">Ctrl+Shift+C</div>
<div class="s" style="top:389px"></div>
<div class="t" style="top:392px">导出模块标签条(L)...</div>
<div class="s" style="top:414px"></div>
<div class="t" style="top:417px">属性</div><div class="t r" style="top:417px">Alt+Enter</div>
</div>

<svg width="1097" height="997" viewBox="0 0 1097 997" style="position:absolute;left:0;top:0">
<use href="#cut" x="628" y="338" width="15" height="16" color="#8a8a8a"/>
<use href="#cpy" x="628" y="357" width="15" height="15"/>
<use href="#pst" x="628" y="375" width="15" height="15"/>
<use href="#del" x="629" y="400" width="13" height="14" color="#7a7a7a"/>
<g><rect x="636" y="425" width="7" height="6" fill="#4a6a9a" stroke="#123"/><rect x="629" y="434" width="6" height="4" fill="#4ab0c8" stroke="#123"/><path d="M636 428h-4v6" fill="none" stroke="#123"/></g>
<use href="#net" x="628" y="443" width="15" height="15"/>
<path d="M814 470l5 4.500-5 4.500zM814 488l5 4.500-5 4.500z" fill="#000"/>
<use href="#onl" x="628" y="503" width="16" height="16"/>
<use href="#off" x="628" y="521" width="16" height="16"/>
<use href="#steth" x="629" y="540" width="14" height="14"/>
<use href="#name" x="628" y="557" width="16" height="16"/>
<use href="#xr" x="628" y="600" width="15" height="15"/>
<use href="#xr" x="628" y="618" width="15" height="15"/>
<g><rect x="629" y="669" width="12" height="13" fill="#dfe7fb" stroke="#7e93c8"/><path d="M632 676h11" stroke="#000" stroke-width="2"/><path d="M640 672l4 4-4 4z" fill="#000"/></g>
<g><rect x="629" y="694" width="13" height="13" fill="#dfe7fb" stroke="#999"/><circle cx="636" cy="700" r="4" fill="#fff" stroke="#345"/><path d="M639 703l4 4" stroke="#2a5ed0" stroke-width="2"/></g>
</svg>

<!-- watermark -->
<svg width="1097" height="997" viewBox="0 0 1097 997" style="position:absolute;left:0;top:0;mix-blend-mode:multiply">
<g fill="none" stroke="#ededed" stroke-width="1" font-family="Liberation Sans,Noto Sans CJK SC,sans-serif">
<text x="384" y="590" font-size="40" transform="rotate(-27 384 590)" letter-spacing="1">西门子工业</text>
<text x="388" y="620" font-size="27" transform="rotate(-28 388 620)" letter-spacing="0.500">support.industry.siemens.com</text>
<text x="600" y="466" font-size="40" transform="rotate(-27 600 466)" letter-spacing="1">找</text>
<text x="672" y="430" font-size="34" transform="rotate(-27 672 430)">答案</text>
</g>
</svg>
</body></html>
